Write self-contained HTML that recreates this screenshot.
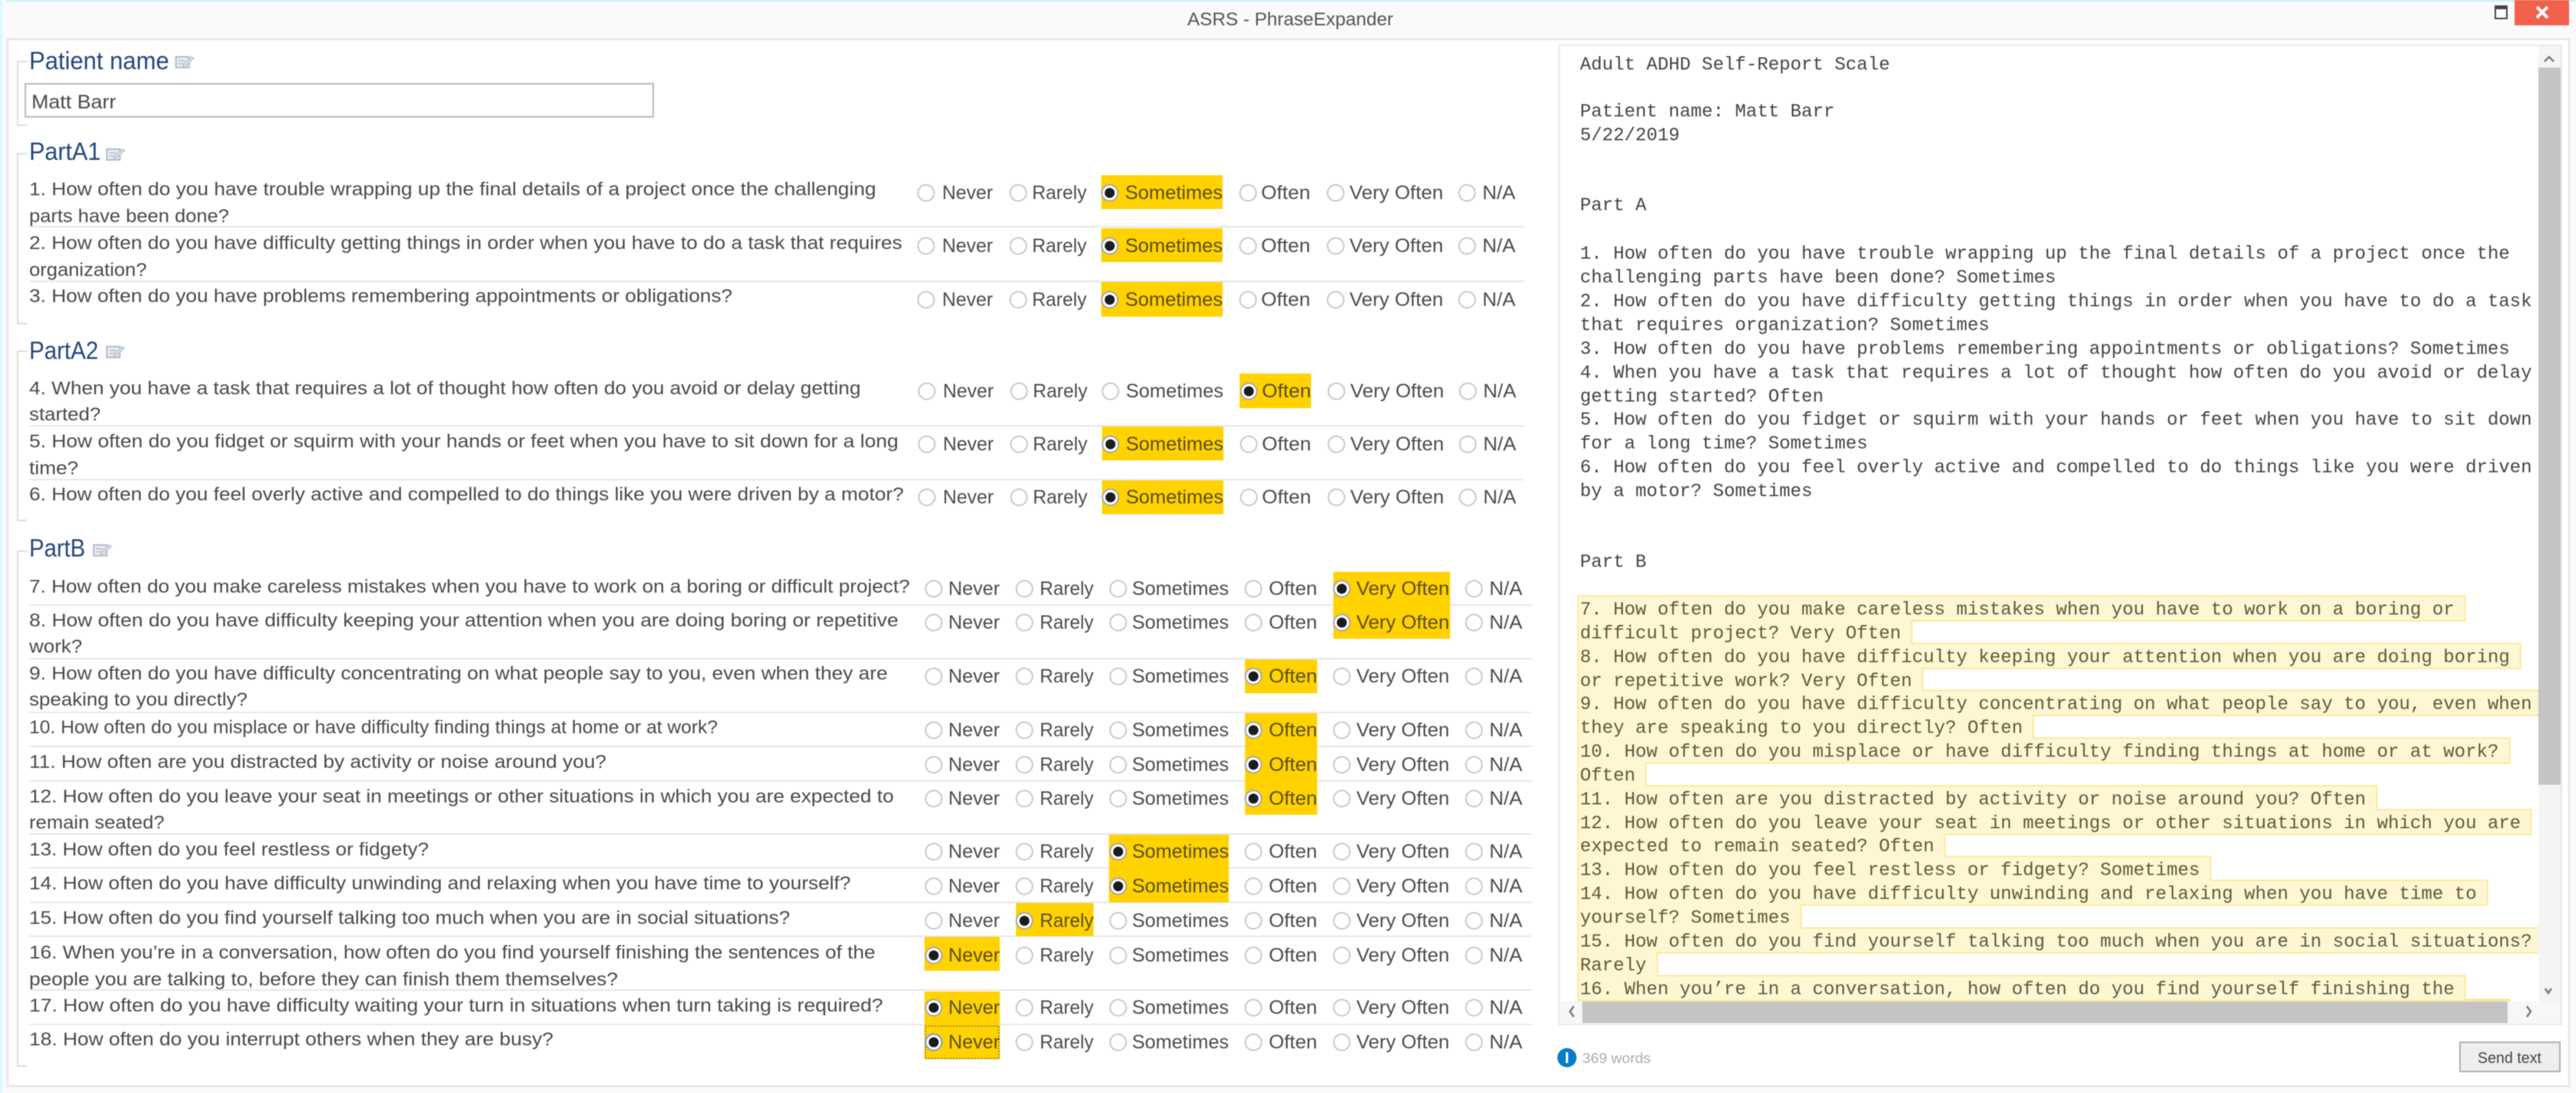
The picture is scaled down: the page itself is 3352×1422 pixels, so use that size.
<!DOCTYPE html>
<html><head><meta charset="utf-8"><title>ASRS - PhraseExpander</title>
<style>
html,body{margin:0;padding:0;background:#fafafa;width:3352px;height:1422px;overflow:hidden}
svg{display:block;filter:blur(.65px)}
text{font-family:"Liberation Sans",sans-serif;white-space:pre}
.q{font-size:24.5px;fill:#4a4a4a}
.o{font-size:25px;fill:#4c4c4c}
.s{font-size:25px;fill:#5a4e14}
.h{font-size:32px;fill:#24477f}
.m{font-family:"Liberation Mono",monospace;font-size:24px;fill:#444}
.y{fill:#5e5a3e}
.r{fill:#fff;stroke:#c8c8c8;stroke-width:2}
.c{fill:#fff;stroke:#a8a8a8;stroke-width:2}
.d{fill:#1c1c1c}
.l{stroke:#e7e7e7;stroke-width:2}
.b{fill:none;stroke:#dcdcdc;stroke-width:2}
.hl{fill:#ffd200}
.yb{fill:#fff6d2;stroke:#ffe48a;stroke-width:3}
.yf{fill:#fff6d2}
.ch{fill:none;stroke:#7c7c7c;stroke-width:2.5}
</style></head><body>
<svg xmlns="http://www.w3.org/2000/svg" width="3352" height="1422" viewBox="0 0 3352 1422">
<defs>
<clipPath id="cy"><rect x="2031" y="61" width="1272" height="1242"/></clipPath>
<g id="ic"><rect x="1" y="1" width="17" height="14" fill="#e9edf3" stroke="#b3bcc8" stroke-width="2"/><path d="M4 6h9M4 10h6" stroke="#b3bcc8" stroke-width="1.5" fill="none"/><path d="M10 11L21 1l3 2-11 10-3 0z" fill="#dbe1e9" stroke="#b8c0cc" stroke-width="1.2"/></g>
</defs>
<rect width="3352" height="1422" fill="#fafafa"/>
<rect width="3352" height="2" fill="#bdf2fb"/>
<rect width="3" height="1422" fill="#dcf7fc"/>
<rect x="3" width="5" height="1422" fill="#f6fdfe"/>
<rect x="10" y="51" width="3333" height="1362" fill="#fff" stroke="#e6e6e6" stroke-width="2.5"/>
<text x="1545" y="33" style="font-size:24px;fill:#555" textLength="268" lengthAdjust="spacingAndGlyphs">ASRS - PhraseExpander</text>
<rect x="3247" y="8" width="15" height="16" fill="#fff" stroke="#444" stroke-width="2"/><rect x="3247" y="8" width="15" height="4" fill="#444"/>
<rect x="3272" y="0" width="71" height="33" fill="#f2614c"/>
<path d="M3301 9l14 14M3315 9l-14 14" stroke="#fff" stroke-width="4" fill="none"/>

<!-- Left brackets -->
<path class="b" d="M36 80H23V163H35"/>
<path class="b" d="M36 200H23V421H35"/>
<path class="b" d="M36 457H23V677H35"/>
<path class="b" d="M36 717H23V1387H35"/>

<!-- Headings -->
<text class="h" x="38" y="90" textLength="182" lengthAdjust="spacingAndGlyphs">Patient name</text>
<use href="#ic" x="228" y="73"/>
<rect x="33" y="109" width="817" height="43" fill="#fff" stroke="#b8b8b8" stroke-width="2"/>
<text x="41" y="141" style="font-size:25px;fill:#4a4a4a" textLength="110" lengthAdjust="spacingAndGlyphs">Matt Barr</text>
<text class="h" x="38" y="208" textLength="93" lengthAdjust="spacingAndGlyphs">PartA1</text>
<use href="#ic" x="138" y="193"/>
<text class="h" x="38" y="467" textLength="90" lengthAdjust="spacingAndGlyphs">PartA2</text>
<use href="#ic" x="138" y="450"/>
<text class="h" x="38" y="724" textLength="73" lengthAdjust="spacingAndGlyphs">PartB</text>
<use href="#ic" x="121" y="708"/>

<!-- Separators -->
<path class="l" d="M38 295H1983M38 366H1983M38 554H1983M38 624H1983M38 787H1993M38 857H1993M38 927H1993M38 971H1993M38 1016H1993M38 1085H1993M38 1129H1993M38 1174H1993M38 1218H1993M38 1288H1993M38 1333H1993"/>

<!-- Highlights -->
<rect class="hl" x="1433" y="228" width="158" height="44"/>
<rect class="hl" x="1433" y="297" width="158" height="44"/>
<rect class="hl" x="1433" y="367" width="158" height="45"/>
<rect class="hl" x="1613" y="486" width="93" height="45"/>
<rect class="hl" x="1434" y="555" width="158" height="44"/>
<rect class="hl" x="1434" y="625" width="158" height="44"/>
<rect class="hl" x="1735" y="744" width="152" height="87"/>
<rect class="hl" x="1620" y="858" width="94" height="44"/>
<rect class="hl" x="1620" y="928" width="94" height="132"/>
<rect class="hl" x="1443" y="1086" width="156" height="88"/>
<rect class="hl" x="1322" y="1175" width="101" height="43"/>
<rect class="hl" x="1203" y="1219" width="98" height="44"/>
<rect class="hl" x="1203" y="1290" width="98" height="88"/>
<rect x="1204" y="1335" width="96" height="42" fill="none" stroke="#8a7a20" stroke-width="1.5" stroke-dasharray="2 2"/>

<!-- Questions -->
<text class="q" x="38" y="254" textLength="1102" lengthAdjust="spacingAndGlyphs">1. How often do you have trouble wrapping up the final details of a project once the challenging</text>
<text class="q" x="38" y="289" textLength="260" lengthAdjust="spacingAndGlyphs">parts have been done?</text>
<text class="q" x="38" y="324" textLength="1136" lengthAdjust="spacingAndGlyphs">2. How often do you have difficulty getting things in order when you have to do a task that requires</text>
<text class="q" x="38" y="359" textLength="153" lengthAdjust="spacingAndGlyphs">organization?</text>
<text class="q" x="38" y="393" textLength="915" lengthAdjust="spacingAndGlyphs">3. How often do you have problems remembering appointments or obligations?</text>
<text class="q" x="38" y="513" textLength="1082" lengthAdjust="spacingAndGlyphs">4. When you have a task that requires a lot of thought how often do you avoid or delay getting</text>
<text class="q" x="38" y="547" textLength="93" lengthAdjust="spacingAndGlyphs">started?</text>
<text class="q" x="38" y="582" textLength="1131" lengthAdjust="spacingAndGlyphs">5. How often do you fidget or squirm with your hands or feet when you have to sit down for a long</text>
<text class="q" x="38" y="617" textLength="64" lengthAdjust="spacingAndGlyphs">time?</text>
<text class="q" x="38" y="651" textLength="1138" lengthAdjust="spacingAndGlyphs">6. How often do you feel overly active and compelled to do things like you were driven by a motor?</text>
<text class="q" x="38" y="771" textLength="1146" lengthAdjust="spacingAndGlyphs">7. How often do you make careless mistakes when you have to work on a boring or difficult project?</text>
<text class="q" x="38" y="815" textLength="1131" lengthAdjust="spacingAndGlyphs">8. How often do you have difficulty keeping your attention when you are doing boring or repetitive</text>
<text class="q" x="38" y="849" textLength="69" lengthAdjust="spacingAndGlyphs">work?</text>
<text class="q" x="38" y="884" textLength="1117" lengthAdjust="spacingAndGlyphs">9. How often do you have difficulty concentrating on what people say to you, even when they are</text>
<text class="q" x="38" y="918" textLength="284" lengthAdjust="spacingAndGlyphs">speaking to you directly?</text>
<text class="q" x="38" y="954" textLength="896" lengthAdjust="spacingAndGlyphs">10. How often do you misplace or have difficulty finding things at home or at work?</text>
<text class="q" x="38" y="999" textLength="751" lengthAdjust="spacingAndGlyphs">11. How often are you distracted by activity or noise around you?</text>
<text class="q" x="38" y="1044" textLength="1125" lengthAdjust="spacingAndGlyphs">12. How often do you leave your seat in meetings or other situations in which you are expected to</text>
<text class="q" x="38" y="1078" textLength="176" lengthAdjust="spacingAndGlyphs">remain seated?</text>
<text class="q" x="38" y="1113" textLength="520" lengthAdjust="spacingAndGlyphs">13. How often do you feel restless or fidgety?</text>
<text class="q" x="38" y="1157" textLength="1069" lengthAdjust="spacingAndGlyphs">14. How often do you have difficulty unwinding and relaxing when you have time to yourself?</text>
<text class="q" x="38" y="1202" textLength="990" lengthAdjust="spacingAndGlyphs">15. How often do you find yourself talking too much when you are in social situations?</text>
<text class="q" x="38" y="1247" textLength="1101" lengthAdjust="spacingAndGlyphs">16. When you’re in a conversation, how often do you find yourself finishing the sentences of the</text>
<text class="q" x="38" y="1282" textLength="766" lengthAdjust="spacingAndGlyphs">people you are talking to, before they can finish them themselves?</text>
<text class="q" x="38" y="1316" textLength="1111" lengthAdjust="spacingAndGlyphs">17. How often do you have difficulty waiting your turn in situations when turn taking is required?</text>
<text class="q" x="38" y="1360" textLength="682" lengthAdjust="spacingAndGlyphs">18. How often do you interrupt others when they are busy?</text>

<!-- Part A1 options -->
<g transform="translate(0,251)"><circle class="r" cx="1205" r="10.5"/><circle class="r" cx="1325" r="10.5"/><circle class="c" cx="1444" r="10.5"/><circle class="d" cx="1444" r="6.5"/><circle class="r" cx="1624" r="10.5"/><circle class="r" cx="1738" r="10.5"/><circle class="r" cx="1909" r="10.5"/><text class="o" x="1226" y="8" textLength="66" lengthAdjust="spacingAndGlyphs">Never</text><text class="o" x="1343" y="8" textLength="71" lengthAdjust="spacingAndGlyphs">Rarely</text><text class="s" x="1464" y="8" textLength="127" lengthAdjust="spacingAndGlyphs">Sometimes</text><text class="o" x="1641" y="8" textLength="64" lengthAdjust="spacingAndGlyphs">Often</text><text class="o" x="1756" y="8" textLength="122" lengthAdjust="spacingAndGlyphs">Very Often</text><text class="o" x="1929" y="8" textLength="43" lengthAdjust="spacingAndGlyphs">N/A</text></g>
<g transform="translate(0,320)"><circle class="r" cx="1205" r="10.5"/><circle class="r" cx="1325" r="10.5"/><circle class="c" cx="1444" r="10.5"/><circle class="d" cx="1444" r="6.5"/><circle class="r" cx="1624" r="10.5"/><circle class="r" cx="1738" r="10.5"/><circle class="r" cx="1909" r="10.5"/><text class="o" x="1226" y="8" textLength="66" lengthAdjust="spacingAndGlyphs">Never</text><text class="o" x="1343" y="8" textLength="71" lengthAdjust="spacingAndGlyphs">Rarely</text><text class="s" x="1464" y="8" textLength="127" lengthAdjust="spacingAndGlyphs">Sometimes</text><text class="o" x="1641" y="8" textLength="64" lengthAdjust="spacingAndGlyphs">Often</text><text class="o" x="1756" y="8" textLength="122" lengthAdjust="spacingAndGlyphs">Very Often</text><text class="o" x="1929" y="8" textLength="43" lengthAdjust="spacingAndGlyphs">N/A</text></g>
<g transform="translate(0,390)"><circle class="r" cx="1205" r="10.5"/><circle class="r" cx="1325" r="10.5"/><circle class="c" cx="1444" r="10.5"/><circle class="d" cx="1444" r="6.5"/><circle class="r" cx="1624" r="10.5"/><circle class="r" cx="1738" r="10.5"/><circle class="r" cx="1909" r="10.5"/><text class="o" x="1226" y="8" textLength="66" lengthAdjust="spacingAndGlyphs">Never</text><text class="o" x="1343" y="8" textLength="71" lengthAdjust="spacingAndGlyphs">Rarely</text><text class="s" x="1464" y="8" textLength="127" lengthAdjust="spacingAndGlyphs">Sometimes</text><text class="o" x="1641" y="8" textLength="64" lengthAdjust="spacingAndGlyphs">Often</text><text class="o" x="1756" y="8" textLength="122" lengthAdjust="spacingAndGlyphs">Very Often</text><text class="o" x="1929" y="8" textLength="43" lengthAdjust="spacingAndGlyphs">N/A</text></g>

<!-- Part A2 options -->
<g transform="translate(1,509)"><circle class="r" cx="1205" r="10.5"/><circle class="r" cx="1325" r="10.5"/><circle class="r" cx="1444" r="10.5"/><circle class="c" cx="1624" r="10.5"/><circle class="d" cx="1624" r="6.5"/><circle class="r" cx="1738" r="10.5"/><circle class="r" cx="1909" r="10.5"/><text class="o" x="1226" y="8" textLength="66" lengthAdjust="spacingAndGlyphs">Never</text><text class="o" x="1343" y="8" textLength="71" lengthAdjust="spacingAndGlyphs">Rarely</text><text class="o" x="1464" y="8" textLength="127" lengthAdjust="spacingAndGlyphs">Sometimes</text><text class="s" x="1641" y="8" textLength="64" lengthAdjust="spacingAndGlyphs">Often</text><text class="o" x="1756" y="8" textLength="122" lengthAdjust="spacingAndGlyphs">Very Often</text><text class="o" x="1929" y="8" textLength="43" lengthAdjust="spacingAndGlyphs">N/A</text></g>
<g transform="translate(1,578)"><circle class="r" cx="1205" r="10.5"/><circle class="r" cx="1325" r="10.5"/><circle class="c" cx="1444" r="10.5"/><circle class="d" cx="1444" r="6.5"/><circle class="r" cx="1624" r="10.5"/><circle class="r" cx="1738" r="10.5"/><circle class="r" cx="1909" r="10.5"/><text class="o" x="1226" y="8" textLength="66" lengthAdjust="spacingAndGlyphs">Never</text><text class="o" x="1343" y="8" textLength="71" lengthAdjust="spacingAndGlyphs">Rarely</text><text class="s" x="1464" y="8" textLength="127" lengthAdjust="spacingAndGlyphs">Sometimes</text><text class="o" x="1641" y="8" textLength="64" lengthAdjust="spacingAndGlyphs">Often</text><text class="o" x="1756" y="8" textLength="122" lengthAdjust="spacingAndGlyphs">Very Often</text><text class="o" x="1929" y="8" textLength="43" lengthAdjust="spacingAndGlyphs">N/A</text></g>
<g transform="translate(1,647)"><circle class="r" cx="1205" r="10.5"/><circle class="r" cx="1325" r="10.5"/><circle class="c" cx="1444" r="10.5"/><circle class="d" cx="1444" r="6.5"/><circle class="r" cx="1624" r="10.5"/><circle class="r" cx="1738" r="10.5"/><circle class="r" cx="1909" r="10.5"/><text class="o" x="1226" y="8" textLength="66" lengthAdjust="spacingAndGlyphs">Never</text><text class="o" x="1343" y="8" textLength="71" lengthAdjust="spacingAndGlyphs">Rarely</text><text class="s" x="1464" y="8" textLength="127" lengthAdjust="spacingAndGlyphs">Sometimes</text><text class="o" x="1641" y="8" textLength="64" lengthAdjust="spacingAndGlyphs">Often</text><text class="o" x="1756" y="8" textLength="122" lengthAdjust="spacingAndGlyphs">Very Often</text><text class="o" x="1929" y="8" textLength="43" lengthAdjust="spacingAndGlyphs">N/A</text></g>

<!-- Part B options -->
<g transform="translate(0,766)"><circle class="r" cx="1215" r="10.5"/><circle class="r" cx="1333" r="10.5"/><circle class="r" cx="1455" r="10.5"/><circle class="r" cx="1631" r="10.5"/><circle class="c" cx="1746" r="10.5"/><circle class="d" cx="1746" r="6.5"/><circle class="r" cx="1918" r="10.5"/><text class="o" x="1234" y="8" textLength="67" lengthAdjust="spacingAndGlyphs">Never</text><text class="o" x="1353" y="8" textLength="70" lengthAdjust="spacingAndGlyphs">Rarely</text><text class="o" x="1473" y="8" textLength="126" lengthAdjust="spacingAndGlyphs">Sometimes</text><text class="o" x="1651" y="8" textLength="63" lengthAdjust="spacingAndGlyphs">Often</text><text class="s" x="1765" y="8" textLength="121" lengthAdjust="spacingAndGlyphs">Very Often</text><text class="o" x="1938" y="8" textLength="43" lengthAdjust="spacingAndGlyphs">N/A</text></g>
<g transform="translate(0,810)"><circle class="r" cx="1215" r="10.5"/><circle class="r" cx="1333" r="10.5"/><circle class="r" cx="1455" r="10.5"/><circle class="r" cx="1631" r="10.5"/><circle class="c" cx="1746" r="10.5"/><circle class="d" cx="1746" r="6.5"/><circle class="r" cx="1918" r="10.5"/><text class="o" x="1234" y="8" textLength="67" lengthAdjust="spacingAndGlyphs">Never</text><text class="o" x="1353" y="8" textLength="70" lengthAdjust="spacingAndGlyphs">Rarely</text><text class="o" x="1473" y="8" textLength="126" lengthAdjust="spacingAndGlyphs">Sometimes</text><text class="o" x="1651" y="8" textLength="63" lengthAdjust="spacingAndGlyphs">Often</text><text class="s" x="1765" y="8" textLength="121" lengthAdjust="spacingAndGlyphs">Very Often</text><text class="o" x="1938" y="8" textLength="43" lengthAdjust="spacingAndGlyphs">N/A</text></g>
<g transform="translate(0,880)"><circle class="r" cx="1215" r="10.5"/><circle class="r" cx="1333" r="10.5"/><circle class="r" cx="1455" r="10.5"/><circle class="c" cx="1631" r="10.5"/><circle class="d" cx="1631" r="6.5"/><circle class="r" cx="1746" r="10.5"/><circle class="r" cx="1918" r="10.5"/><text class="o" x="1234" y="8" textLength="67" lengthAdjust="spacingAndGlyphs">Never</text><text class="o" x="1353" y="8" textLength="70" lengthAdjust="spacingAndGlyphs">Rarely</text><text class="o" x="1473" y="8" textLength="126" lengthAdjust="spacingAndGlyphs">Sometimes</text><text class="s" x="1651" y="8" textLength="63" lengthAdjust="spacingAndGlyphs">Often</text><text class="o" x="1765" y="8" textLength="121" lengthAdjust="spacingAndGlyphs">Very Often</text><text class="o" x="1938" y="8" textLength="43" lengthAdjust="spacingAndGlyphs">N/A</text></g>
<g transform="translate(0,950)"><circle class="r" cx="1215" r="10.5"/><circle class="r" cx="1333" r="10.5"/><circle class="r" cx="1455" r="10.5"/><circle class="c" cx="1631" r="10.5"/><circle class="d" cx="1631" r="6.5"/><circle class="r" cx="1746" r="10.5"/><circle class="r" cx="1918" r="10.5"/><text class="o" x="1234" y="8" textLength="67" lengthAdjust="spacingAndGlyphs">Never</text><text class="o" x="1353" y="8" textLength="70" lengthAdjust="spacingAndGlyphs">Rarely</text><text class="o" x="1473" y="8" textLength="126" lengthAdjust="spacingAndGlyphs">Sometimes</text><text class="s" x="1651" y="8" textLength="63" lengthAdjust="spacingAndGlyphs">Often</text><text class="o" x="1765" y="8" textLength="121" lengthAdjust="spacingAndGlyphs">Very Often</text><text class="o" x="1938" y="8" textLength="43" lengthAdjust="spacingAndGlyphs">N/A</text></g>
<g transform="translate(0,995)"><circle class="r" cx="1215" r="10.5"/><circle class="r" cx="1333" r="10.5"/><circle class="r" cx="1455" r="10.5"/><circle class="c" cx="1631" r="10.5"/><circle class="d" cx="1631" r="6.5"/><circle class="r" cx="1746" r="10.5"/><circle class="r" cx="1918" r="10.5"/><text class="o" x="1234" y="8" textLength="67" lengthAdjust="spacingAndGlyphs">Never</text><text class="o" x="1353" y="8" textLength="70" lengthAdjust="spacingAndGlyphs">Rarely</text><text class="o" x="1473" y="8" textLength="126" lengthAdjust="spacingAndGlyphs">Sometimes</text><text class="s" x="1651" y="8" textLength="63" lengthAdjust="spacingAndGlyphs">Often</text><text class="o" x="1765" y="8" textLength="121" lengthAdjust="spacingAndGlyphs">Very Often</text><text class="o" x="1938" y="8" textLength="43" lengthAdjust="spacingAndGlyphs">N/A</text></g>
<g transform="translate(0,1039)"><circle class="r" cx="1215" r="10.5"/><circle class="r" cx="1333" r="10.5"/><circle class="r" cx="1455" r="10.5"/><circle class="c" cx="1631" r="10.5"/><circle class="d" cx="1631" r="6.5"/><circle class="r" cx="1746" r="10.5"/><circle class="r" cx="1918" r="10.5"/><text class="o" x="1234" y="8" textLength="67" lengthAdjust="spacingAndGlyphs">Never</text><text class="o" x="1353" y="8" textLength="70" lengthAdjust="spacingAndGlyphs">Rarely</text><text class="o" x="1473" y="8" textLength="126" lengthAdjust="spacingAndGlyphs">Sometimes</text><text class="s" x="1651" y="8" textLength="63" lengthAdjust="spacingAndGlyphs">Often</text><text class="o" x="1765" y="8" textLength="121" lengthAdjust="spacingAndGlyphs">Very Often</text><text class="o" x="1938" y="8" textLength="43" lengthAdjust="spacingAndGlyphs">N/A</text></g>
<g transform="translate(0,1108)"><circle class="r" cx="1215" r="10.5"/><circle class="r" cx="1333" r="10.5"/><circle class="c" cx="1455" r="10.5"/><circle class="d" cx="1455" r="6.5"/><circle class="r" cx="1631" r="10.5"/><circle class="r" cx="1746" r="10.5"/><circle class="r" cx="1918" r="10.5"/><text class="o" x="1234" y="8" textLength="67" lengthAdjust="spacingAndGlyphs">Never</text><text class="o" x="1353" y="8" textLength="70" lengthAdjust="spacingAndGlyphs">Rarely</text><text class="s" x="1473" y="8" textLength="126" lengthAdjust="spacingAndGlyphs">Sometimes</text><text class="o" x="1651" y="8" textLength="63" lengthAdjust="spacingAndGlyphs">Often</text><text class="o" x="1765" y="8" textLength="121" lengthAdjust="spacingAndGlyphs">Very Often</text><text class="o" x="1938" y="8" textLength="43" lengthAdjust="spacingAndGlyphs">N/A</text></g>
<g transform="translate(0,1153)"><circle class="r" cx="1215" r="10.5"/><circle class="r" cx="1333" r="10.5"/><circle class="c" cx="1455" r="10.5"/><circle class="d" cx="1455" r="6.5"/><circle class="r" cx="1631" r="10.5"/><circle class="r" cx="1746" r="10.5"/><circle class="r" cx="1918" r="10.5"/><text class="o" x="1234" y="8" textLength="67" lengthAdjust="spacingAndGlyphs">Never</text><text class="o" x="1353" y="8" textLength="70" lengthAdjust="spacingAndGlyphs">Rarely</text><text class="s" x="1473" y="8" textLength="126" lengthAdjust="spacingAndGlyphs">Sometimes</text><text class="o" x="1651" y="8" textLength="63" lengthAdjust="spacingAndGlyphs">Often</text><text class="o" x="1765" y="8" textLength="121" lengthAdjust="spacingAndGlyphs">Very Often</text><text class="o" x="1938" y="8" textLength="43" lengthAdjust="spacingAndGlyphs">N/A</text></g>
<g transform="translate(0,1198)"><circle class="r" cx="1215" r="10.5"/><circle class="c" cx="1333" r="10.5"/><circle class="d" cx="1333" r="6.5"/><circle class="r" cx="1455" r="10.5"/><circle class="r" cx="1631" r="10.5"/><circle class="r" cx="1746" r="10.5"/><circle class="r" cx="1918" r="10.5"/><text class="o" x="1234" y="8" textLength="67" lengthAdjust="spacingAndGlyphs">Never</text><text class="s" x="1353" y="8" textLength="70" lengthAdjust="spacingAndGlyphs">Rarely</text><text class="o" x="1473" y="8" textLength="126" lengthAdjust="spacingAndGlyphs">Sometimes</text><text class="o" x="1651" y="8" textLength="63" lengthAdjust="spacingAndGlyphs">Often</text><text class="o" x="1765" y="8" textLength="121" lengthAdjust="spacingAndGlyphs">Very Often</text><text class="o" x="1938" y="8" textLength="43" lengthAdjust="spacingAndGlyphs">N/A</text></g>
<g transform="translate(0,1243)"><circle class="c" cx="1215" r="10.5"/><circle class="d" cx="1215" r="6.5"/><circle class="r" cx="1333" r="10.5"/><circle class="r" cx="1455" r="10.5"/><circle class="r" cx="1631" r="10.5"/><circle class="r" cx="1746" r="10.5"/><circle class="r" cx="1918" r="10.5"/><text class="s" x="1234" y="8" textLength="67" lengthAdjust="spacingAndGlyphs">Never</text><text class="o" x="1353" y="8" textLength="70" lengthAdjust="spacingAndGlyphs">Rarely</text><text class="o" x="1473" y="8" textLength="126" lengthAdjust="spacingAndGlyphs">Sometimes</text><text class="o" x="1651" y="8" textLength="63" lengthAdjust="spacingAndGlyphs">Often</text><text class="o" x="1765" y="8" textLength="121" lengthAdjust="spacingAndGlyphs">Very Often</text><text class="o" x="1938" y="8" textLength="43" lengthAdjust="spacingAndGlyphs">N/A</text></g>
<g transform="translate(0,1311)"><circle class="c" cx="1215" r="10.5"/><circle class="d" cx="1215" r="6.5"/><circle class="r" cx="1333" r="10.5"/><circle class="r" cx="1455" r="10.5"/><circle class="r" cx="1631" r="10.5"/><circle class="r" cx="1746" r="10.5"/><circle class="r" cx="1918" r="10.5"/><text class="s" x="1234" y="8" textLength="67" lengthAdjust="spacingAndGlyphs">Never</text><text class="o" x="1353" y="8" textLength="70" lengthAdjust="spacingAndGlyphs">Rarely</text><text class="o" x="1473" y="8" textLength="126" lengthAdjust="spacingAndGlyphs">Sometimes</text><text class="o" x="1651" y="8" textLength="63" lengthAdjust="spacingAndGlyphs">Often</text><text class="o" x="1765" y="8" textLength="121" lengthAdjust="spacingAndGlyphs">Very Often</text><text class="o" x="1938" y="8" textLength="43" lengthAdjust="spacingAndGlyphs">N/A</text></g>
<g transform="translate(0,1356)"><circle cx="1215" r="10.5" fill="#fff" stroke="#7f9cc8" stroke-width="2"/><circle class="d" cx="1215" r="6.5"/><circle class="r" cx="1333" r="10.5"/><circle class="r" cx="1455" r="10.5"/><circle class="r" cx="1631" r="10.5"/><circle class="r" cx="1746" r="10.5"/><circle class="r" cx="1918" r="10.5"/><text class="s" x="1234" y="8" textLength="67" lengthAdjust="spacingAndGlyphs">Never</text><text class="o" x="1353" y="8" textLength="70" lengthAdjust="spacingAndGlyphs">Rarely</text><text class="o" x="1473" y="8" textLength="126" lengthAdjust="spacingAndGlyphs">Sometimes</text><text class="o" x="1651" y="8" textLength="63" lengthAdjust="spacingAndGlyphs">Often</text><text class="o" x="1765" y="8" textLength="121" lengthAdjust="spacingAndGlyphs">Very Often</text><text class="o" x="1938" y="8" textLength="43" lengthAdjust="spacingAndGlyphs">N/A</text></g>

<!-- Right preview pane -->
<rect x="2029" y="59" width="1304" height="1274" fill="#fff" stroke="#e8e8e8" stroke-width="2"/>
<g clip-path="url(#cy)">
<g class="yb">
<rect x="2054" y="776" width="1153" height="31"/><rect x="2054" y="807" width="433" height="31"/><rect x="2054" y="838" width="1225" height="31"/><rect x="2054" y="869" width="447" height="31"/><rect x="2054" y="899" width="1260" height="31"/><rect x="2054" y="930" width="591" height="31"/><rect x="2054" y="961" width="1211" height="31"/><rect x="2054" y="992" width="87" height="31"/><rect x="2054" y="1023" width="1038" height="31"/><rect x="2054" y="1054" width="1239" height="31"/><rect x="2054" y="1084" width="476" height="31"/><rect x="2054" y="1115" width="822" height="31"/><rect x="2054" y="1146" width="1182" height="31"/><rect x="2054" y="1177" width="289" height="31"/><rect x="2054" y="1208" width="1260" height="31"/><rect x="2054" y="1239" width="102" height="31"/><rect x="2054" y="1270" width="1153" height="31"/><rect x="2054" y="1301" width="1211" height="31"/>
</g>
<g class="yf">
<rect x="2054" y="776" width="1153" height="31"/><rect x="2054" y="807" width="433" height="31"/><rect x="2054" y="838" width="1225" height="31"/><rect x="2054" y="869" width="447" height="31"/><rect x="2054" y="899" width="1260" height="31"/><rect x="2054" y="930" width="591" height="31"/><rect x="2054" y="961" width="1211" height="31"/><rect x="2054" y="992" width="87" height="31"/><rect x="2054" y="1023" width="1038" height="31"/><rect x="2054" y="1054" width="1239" height="31"/><rect x="2054" y="1084" width="476" height="31"/><rect x="2054" y="1115" width="822" height="31"/><rect x="2054" y="1146" width="1182" height="31"/><rect x="2054" y="1177" width="289" height="31"/><rect x="2054" y="1208" width="1260" height="31"/><rect x="2054" y="1239" width="102" height="31"/><rect x="2054" y="1270" width="1153" height="31"/>
</g>
<g transform="translate(0,-1.5)">
<text class="m" x="2056" y="92">Adult ADHD Self-Report Scale</text>
<text class="m" x="2056" y="153">Patient name: Matt Barr</text>
<text class="m" x="2056" y="184">5/22/2019</text>
<text class="m" x="2056" y="275">Part A</text>
<text class="m" x="2056" y="338">1. How often do you have trouble wrapping up the final details of a project once the</text>
<text class="m" x="2056" y="369">challenging parts have been done? Sometimes</text>
<text class="m" x="2056" y="400">2. How often do you have difficulty getting things in order when you have to do a task</text>
<text class="m" x="2056" y="431">that requires organization? Sometimes</text>
<text class="m" x="2056" y="462">3. How often do you have problems remembering appointments or obligations? Sometimes</text>
<text class="m" x="2056" y="493">4. When you have a task that requires a lot of thought how often do you avoid or delay</text>
<text class="m" x="2056" y="524">getting started? Often</text>
<text class="m" x="2056" y="554">5. How often do you fidget or squirm with your hands or feet when you have to sit down</text>
<text class="m" x="2056" y="585">for a long time? Sometimes</text>
<text class="m" x="2056" y="616">6. How often do you feel overly active and compelled to do things like you were driven</text>
<text class="m" x="2056" y="647">by a motor? Sometimes</text>
<text class="m" x="2056" y="739">Part B</text>
<text class="m y" x="2056" y="801">7. How often do you make careless mistakes when you have to work on a boring or</text>
<text class="m y" x="2056" y="832">difficult project? Very Often</text>
<text class="m y" x="2056" y="863">8. How often do you have difficulty keeping your attention when you are doing boring</text>
<text class="m y" x="2056" y="894">or repetitive work? Very Often</text>
<text class="m y" x="2056" y="924">9. How often do you have difficulty concentrating on what people say to you, even when</text>
<text class="m y" x="2056" y="955">they are speaking to you directly? Often</text>
<text class="m y" x="2056" y="986">10. How often do you misplace or have difficulty finding things at home or at work?</text>
<text class="m y" x="2056" y="1017">Often</text>
<text class="m y" x="2056" y="1048">11. How often are you distracted by activity or noise around you? Often</text>
<text class="m y" x="2056" y="1079">12. How often do you leave your seat in meetings or other situations in which you are</text>
<text class="m y" x="2056" y="1109">expected to remain seated? Often</text>
<text class="m y" x="2056" y="1140">13. How often do you feel restless or fidgety? Sometimes</text>
<text class="m y" x="2056" y="1171">14. How often do you have difficulty unwinding and relaxing when you have time to</text>
<text class="m y" x="2056" y="1202">yourself? Sometimes</text>
<text class="m y" x="2056" y="1233">15. How often do you find yourself talking too much when you are in social situations?</text>
<text class="m y" x="2056" y="1264">Rarely</text>
<text class="m y" x="2056" y="1295">16. When you’re in a conversation, how often do you find yourself finishing the</text>
</g>
</g>
<!-- Scrollbars -->
<rect x="3303" y="60" width="29" height="1243" fill="#f4f4f4"/>
<rect x="3303" y="88" width="29" height="933" fill="#c4c4c4"/>
<path class="ch" d="M3311 80l6-6 6 6"/>
<path class="ch" d="M3312 1286l4 6 4-6"/>
<rect x="2030" y="1303" width="1302" height="29" fill="#f7f7f7"/>
<rect x="2059" y="1303" width="1204" height="28" fill="#c4c4c4"/>
<path class="ch" d="M2048 1309l-5 7 5 7"/>
<path class="ch" d="M3288 1309l5 7-5 7"/>

<!-- Footer -->
<circle cx="2039" cy="1376" r="12.5" fill="#0a7cc4"/>
<rect x="2037.5" y="1369" width="3" height="14" fill="#fff"/>
<text x="2059" y="1383" style="font-size:18.5px;fill:#ababab" textLength="89" lengthAdjust="spacingAndGlyphs">369 words</text>
<rect x="3201" y="1356" width="130" height="38" fill="#eeeeee" stroke="#b0b0b0" stroke-width="2"/>
<text x="3224" y="1383" style="font-size:20px;fill:#444" textLength="83" lengthAdjust="spacingAndGlyphs">Send text</text>
</svg>
</body></html>
